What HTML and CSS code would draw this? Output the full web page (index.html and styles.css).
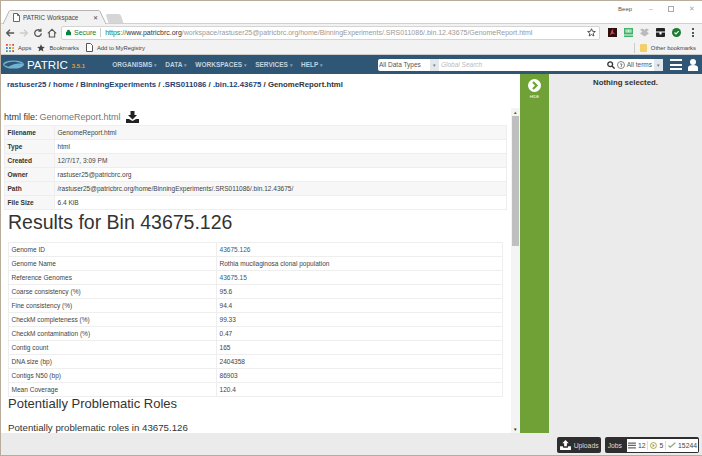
FILE: index.html
```html
<!DOCTYPE html>
<html lang="en">
<head>
  <meta charset="UTF-8">
  <title>PATRIC Workspace</title>
  <link rel="stylesheet" href="styles.css">
</head>
<body>
  <div class="window">
    <div class="tabstrip">
      <div class="tab">
        <svg class="tab-shape" width="103" height="14" viewBox="0 0 103 14"><path d="M0 14 6 1.500Q6.500.5 8 .5h87q1.500 0 2 1L103 14" fill="#f2f2f2" stroke="#b5b5b5"/></svg>
        <svg class="tab-icon" width="7" height="9" viewBox="0 0 7 9"><path d="M.5.500h4l2 2v6h-6zM4.500.5v2h2" fill="#fff" stroke="#666"/></svg>
        <span class="tab-title">PATRIC Workspace</span>
        <span class="tab-close">✕</span>
      </div>
      <div class="new-tab"></div>
      <div class="win-controls">
        <span class="win-user">Beep</span>
        <span class="win-btn">–</span>
        <span class="win-max"></span>
        <span class="win-btn">✕</span>
      </div>
    </div>

    <div class="toolbar">
      <svg class="tool" width="10" height="10" viewBox="0 0 12 12"><path d="M11 6H2M6 2 2 6l4 4" fill="none" stroke="#555" stroke-width="1.6"/></svg>
      <svg class="tool" width="10" height="10" viewBox="0 0 12 12"><path d="M1 6h9M6 2l4 4-4 4" fill="none" stroke="#ccc" stroke-width="1.6"/></svg>
      <svg class="tool" width="10" height="10" viewBox="0 0 12 12"><path d="M10 6.500A4 4 0 1 1 8.800 3.200M9.500 .8v3h-3" fill="none" stroke="#555" stroke-width="1.500"/></svg>
      <svg class="tool" width="10" height="10" viewBox="0 0 12 12"><path d="M1 6.500 6 1.500l5 5M2.800 5.500v5.300h6.400V5.500" fill="none" stroke="#555" stroke-width="1.300"/></svg>
      <div class="omnibox">
        <svg width="5" height="7" viewBox="0 0 7 8"><path d="M0 3h7v5H0zM1.500 3V2a2 2 0 0 1 4 0v1" fill="#0b8043"/></svg>
        <span class="secure">Secure</span>
        <span class="omni-sep"></span>
        <span class="url"><span class="url-https">https://</span><span class="url-host">www.patricbrc.org</span>/workspace/rastuser25@patricbrc.org/home/BinningExperiments/.SRS011086/.bin.12.43675/GenomeReport.html</span>
        <svg class="omni-star" width="9" height="9" viewBox="0 0 10 10"><path d="m5 .8 1.200 2.900 3.100.2-2.400 2 .8 3L5 7.300 2.300 8.900l.8-3-2.400-2 3.100-.2z" fill="none" stroke="#444"/></svg>
      </div>
      <div class="extensions">
        <svg width="9" height="9" viewBox="0 0 9 9"><path d="M0 0h9v9H0z" fill="#2a1010"/><path d="M4 1.500h1.200L5 4l2.500 2.500-2.500-1-3 1.500z" fill="#e0453a"/></svg>
        <svg width="9" height="9" viewBox="0 0 9 9"><path d="M0 0h9v6.500H0z" fill="#3fb56a"/><path d="M1.500 1.500h6v3h-6z" fill="#d9f2e0"/><path d="M0 7.500h9V9H0z" fill="#3fb56a"/><path d="M2.500 2.500h1v1h-1zM5.500 2.500h1v1h-1z" fill="#2b8a4e"/></svg>
        <svg width="9" height="9" viewBox="0 0 10 10"><path d="M0 2 2.500.5 5 2 7.500.5 10 2 7.500 4 10 6 5 9.500 0 6l2.500-2z" fill="#bbb"/></svg>
        <svg width="9" height="9" viewBox="0 0 9 9"><path d="M1 0h7a1 1 0 0 1 1 1v7a1 1 0 0 1-1 1H1a1 1 0 0 1-1-1V1a1 1 0 0 1 1-1z" fill="#222"/><path d="M0 3.500h9v1H5.500v2h-2v-2H0z" fill="#fff"/></svg>
        <svg width="9" height="9" viewBox="0 0 10 10"><circle cx="5" cy="5" r="5" fill="#1d7a30"/><path d="m2.800 5 1.600 1.600 3-3" fill="none" stroke="#fff" stroke-width="1.200"/></svg>
        <span class="kebab"><i></i><i></i><i></i></span>
      </div>
    </div>

    <div class="bookmarks">
      <svg width="8" height="8" viewBox="0 0 9 9">
        <path d="M0 0h2v2H0z" fill="#d9453a"/><path d="M3.500 0h2v2h-2z" fill="#e8a33b"/><path d="M7 0h2v2H7z" fill="#d9453a"/>
        <path d="M0 3.500h2v2H0z" fill="#4a8af0"/><path d="M3.500 3.500h2v2h-2z" fill="#3fa65a"/><path d="M7 3.500h2v2H7z" fill="#e8a33b"/>
        <path d="M0 7h2v2H0z" fill="#3fa65a"/><path d="M3.500 7h2v2h-2z" fill="#4a8af0"/><path d="M7 7h2v2H7z" fill="#d9453a"/>
      </svg>
      <span class="bm-label">Apps</span>
      <svg class="bm-star" width="8" height="8" viewBox="0 0 10 10"><path d="m5 .3 1.400 3.200 3.400.3-2.600 2.200.8 3.400L5 7.600 2 9.400l.8-3.400L.2 3.800l3.400-.3z" fill="#444"/></svg>
      <span class="bm-label">Bookmarks</span>
      <svg class="bm-doc" width="7" height="9" viewBox="0 0 7 9"><path d="M.5.500h4l2 2v6h-6z" fill="#fff" stroke="#555"/></svg>
      <span class="bm-label">Add to MyRegistry</span>
      <span class="bm-sep"></span>
      <span class="folder"></span>
      <span class="bm-label">Other bookmarks</span>
    </div>

    <nav class="site-nav">
      <svg class="logo" width="21" height="9" viewBox="0 0 23 9"><ellipse cx="11.500" cy="4.500" rx="11.500" ry="4.500" fill="#6fb2d2"/><path d="M1 5c5-5 12-4 21-2-7 0-12 1-16 4z" fill="#2f5675"/></svg>
      <span class="brand">PATRIC</span>
      <span class="version">3.5.1</span>
      <div class="menu">
        <span class="menu-item">ORGANISMS<i>▾</i></span>
        <span class="menu-item">DATA<i>▾</i></span>
        <span class="menu-item">WORKSPACES<i>▾</i></span>
        <span class="menu-item">SERVICES<i>▾</i></span>
        <span class="menu-item">HELP<i>▾</i></span>
      </div>
      <div class="search">
        <span class="search-type">All Data Types</span>
        <span class="caret-box">▾</span>
        <span class="search-input">Global Search</span>
        <svg width="8" height="8" viewBox="0 0 8 8"><circle cx="3.200" cy="3.200" r="2.400" fill="none" stroke="#333" stroke-width="1.300"/><path d="m5 5 2.600 2.600" stroke="#333" stroke-width="1.400"/></svg>
        <svg width="8" height="8" viewBox="0 0 8 8"><circle cx="4" cy="4" r="3.500" fill="none" stroke="#666" stroke-width=".8"/><path d="M3 3h2L4 6" fill="none" stroke="#666" stroke-width=".8"/></svg>
        <span class="search-terms">All terms</span>
        <span class="caret-box">▾</span>
      </div>
      <span class="burger"><i></i><i></i><i></i></span>
      <svg width="10" height="12" viewBox="0 0 10 12"><circle cx="5" cy="3" r="3" fill="#fff"/><path d="M0 12V8.500C0 7 2 6 5 6s5 1 5 2.500V12z" fill="#fff"/></svg>
    </nav>

    <div class="workspace">
      <main class="content">
        <div class="breadcrumb">
          <span class="crumb">rastuser25</span> / <span class="crumb">home</span> / <span class="crumb">BinningExperiments</span> / <span class="crumb">.SRS011086</span> / <span class="crumb">.bin.12.43675</span> / GenomeReport.html
        </div>
        <div class="viewer">
          <div class="report">
            <div class="file-head">
              <span class="file-kind">html file:</span>
              <span class="file-name">GenomeReport.html</span>
              <svg class="download" width="13" height="12" viewBox="0 0 13 12"><path d="M4.500 0h4v4h2.500L6.500 8.500 2 4h2.500zM0 8h3l3.500 2L10 8h3v4H0z" fill="#222"/></svg>
            </div>
            <table class="meta">
              <tr><th>Filename</th><td>GenomeReport.html</td></tr>
              <tr><th>Type</th><td>html</td></tr>
              <tr><th>Created</th><td>12/7/17, 3:09 PM</td></tr>
              <tr><th>Owner</th><td>rastuser25@patricbrc.org</td></tr>
              <tr><th>Path</th><td>/rastuser25@patricbrc.org/home/BinningExperiments/.SRS011086/.bin.12.43675/</td></tr>
              <tr><th>File Size</th><td>6.4 KiB</td></tr>
            </table>
            <h1>Results for Bin 43675.126</h1>
            <table class="results">
              <tr><td>Genome ID</td><td><span class="link">43675.126</span></td></tr>
              <tr><td>Genome Name</td><td>Rothia mucilaginosa clonal population</td></tr>
              <tr><td>Reference Genomes</td><td><span class="link">43675.15</span></td></tr>
              <tr><td>Coarse consistency (%)</td><td>95.6</td></tr>
              <tr><td>Fine consistency (%)</td><td>94.4</td></tr>
              <tr><td>CheckM completeness (%)</td><td>99.33</td></tr>
              <tr><td>CheckM contamination (%)</td><td>0.47</td></tr>
              <tr><td>Contig count</td><td>165</td></tr>
              <tr><td>DNA size (bp)</td><td>2404358</td></tr>
              <tr><td>Contigs N50 (bp)</td><td>86903</td></tr>
              <tr><td>Mean Coverage</td><td>120.4</td></tr>
            </table>
            <h2>Potentially Problematic Roles</h2>
            <p class="roles">Potentially problematic roles in 43675.126</p>
          </div>
          <div class="scrollbar">
            <span class="arrow">▴</span>
            <span class="thumb"></span>
            <span class="arrow arrow-end">▾</span>
          </div>
        </div>
      </main>

      <div class="hide-panel">
        <span class="hide-btn">
          <svg width="13" height="13" viewBox="0 0 13 13"><circle cx="6.500" cy="6.500" r="6.500" fill="#fff"/><path d="m5 3 3.500 3.500L5 10" fill="none" stroke="#6fa136" stroke-width="2.200"/></svg>
        </span>
        <span class="hide-label">HIDE</span>
      </div>

      <aside class="details">Nothing selected.</aside>
    </div>

    <footer class="statusbar">
      <div class="status-box uploads">
        <svg width="11" height="10" viewBox="0 0 12 11"><path d="M4.500 7V3.500H2.500L6 0l3.500 3.500h-2V7zM0 7h3l.5 1.500h5L9 7h3v4H0z" fill="#fff"/></svg>
        <span>Uploads</span>
      </div>
      <div class="status-box jobs">
        <span>Jobs</span>
        <div class="job-counts">
          <svg width="8" height="7" viewBox="0 0 9 7"><path d="M0 0h9v1.500H0zM0 2.700h9v1.500H0zM0 5.400h9V7H0z" fill="#666"/></svg>
          <span>12</span>
          <span class="job-sep"></span>
          <svg width="7" height="7" viewBox="0 0 8 8"><circle cx="4" cy="4" r="3.400" fill="none" stroke="#a09a2c"/><path d="M3 2.300 5.600 4 3 5.700z" fill="#a09a2c"/></svg>
          <span>5</span>
          <span class="job-sep"></span>
          <svg width="8" height="6" viewBox="0 0 9 7"><path d="m.5 4 2 2L8.500.8" fill="none" stroke="#8aa880" stroke-width="1.500"/></svg>
          <span>15244</span>
        </div>
      </div>
    </footer>
  </div>
</body>
</html>
```

FILE: styles.css
```css
* {
  box-sizing: border-box;
}

html, body {
  margin: 0;
  padding: 0;
  height: 100%;
  overflow: hidden;
}

body {
  font-family: "Liberation Sans", Arial, sans-serif;
  background-color: #fff;
  color: #333;
}

.window {
  display: flex;
  flex-direction: column;
  height: 456px;
  border-top: 1px solid #b8ad9c;
  border-left: 1px solid #b8ad9c;
}

/* browser chrome */
.tabstrip {
  display: flex;
  align-items: flex-end;
  flex: none;
  height: 23px;
  padding-left: 2px;
  background-color: #fff;
  border-bottom: 1px solid #d0d0d0;
}

.tab {
  position: relative;
  display: flex;
  align-items: center;
  width: 103px;
  height: 14px;
  margin-bottom: -1px;
  padding: 0 8px 0 10px;
  font-size: 6.300px;
  color: #444;
}

.tab-shape {
  position: absolute;
  left: 0;
  top: 0;
}

.tab-icon, .tab-title, .tab-close {
  position: relative;
}

.tab-title {
  margin-left: 3px;
  white-space: nowrap;
}

.tab-close {
  margin-left: auto;
  font-size: 6px;
}

.new-tab {
  width: 15px;
  height: 9px;
  margin-left: 1px;
  background-color: #d6d6d6;
  border-radius: 2px 2px 0 0;
  transform: skewX(18deg);
}

.win-controls {
  display: flex;
  align-items: center;
  gap: 15px;
  margin-left: auto;
  margin-right: 7px;
  height: 15px;
  align-self: flex-start;
  font-size: 6px;
  color: #888;
}

.win-user {
  color: #555;
  margin-right: 2px;
}

.win-btn {
  font-size: 7px;
  color: #aaa;
}

.win-max {
  width: 6px;
  height: 6px;
  border: 1px solid #aaa;
}

.toolbar {
  display: flex;
  align-items: center;
  flex: none;
  gap: 4px;
  height: 17px;
  padding: 0 5px 0 4px;
  background-color: #f2f2f2;
}

.tool {
  flex: none;
}

.omnibox {
  display: flex;
  align-items: center;
  flex: 1;
  height: 14px;
  padding: 0 3px 0 4px;
  background-color: #fff;
  border: 1px solid #d4d4d4;
  border-radius: 2px;
  font-size: 7px;
  color: #999;
  white-space: nowrap;
}

.secure {
  margin-left: 3px;
  color: #0b8043;
}

.omni-sep {
  width: 1px;
  height: 9px;
  margin: 0 4px;
  background-color: #ccc;
}

.url-https {
  color: #0b8043;
}

.url-host {
  color: #333;
}

.omni-star {
  margin-left: auto;
}

.extensions {
  display: flex;
  align-items: center;
  gap: 7px;
  margin-left: 4px;
}

.kebab {
  display: flex;
  flex-direction: column;
  gap: 1.500px;
  margin: 0 3px 0 4px;
}

.kebab i {
  width: 2px;
  height: 2px;
  background-color: #555;
}

.bookmarks {
  display: flex;
  align-items: center;
  flex: none;
  gap: 4px;
  height: 14px;
  padding: 0 6px 0 5px;
  background-color: #f2f2f2;
  border-bottom: 1px solid #ccc;
}

.bm-label {
  font-size: 5.900px;
  color: #444;
  white-space: nowrap;
}

.bm-star {
  margin-left: 2px;
}

.bm-doc {
  margin-left: 3px;
}

.bm-sep {
  width: 1px;
  height: 10px;
  margin-left: auto;
  background-color: #ccc;
}

.folder {
  width: 7px;
  height: 8px;
  margin-left: 1px;
  background-color: #f3cf6b;
  border-radius: 1px;
}

/* site header */
.site-nav {
  display: flex;
  align-items: center;
  flex: none;
  height: 19px;
  padding-left: 2px;
  padding-right: 4px;
  background-color: #2f5675;
  color: #fff;
}

.brand {
  margin-left: 3px;
  font-size: 11.600px;
}

.version {
  margin-left: 4px;
  margin-top: 2px;
  font-size: 6px;
  font-weight: bold;
  color: #e0a030;
}

.menu {
  display: flex;
  gap: 8px;
  margin-left: 27px;
}

.menu-item {
  font-size: 6.500px;
  font-weight: bold;
  color: #c3d2de;
  white-space: nowrap;
}

.menu-item i {
  margin-left: 2px;
  font-style: normal;
  font-size: 5px;
  color: #7e9bb1;
}

.search {
  display: flex;
  align-items: center;
  gap: 2px;
  width: 285px;
  height: 12px;
  margin-left: auto;
  padding: 0 0 0 1px;
  background-color: #fff;
  border-radius: 2px;
  font-size: 6.500px;
  color: #555;
}

.search-type {
  width: 49px;
  white-space: nowrap;
}

.caret-box {
  display: flex;
  align-items: center;
  justify-content: center;
  width: 9px;
  height: 12px;
  background-color: #e3e8ec;
  font-size: 5px;
  color: #778;
}

.search-input {
  flex: 1;
  font-style: italic;
  color: #bbb;
}

.search-terms {
  white-space: nowrap;
}

.burger {
  display: flex;
  flex-direction: column;
  gap: 2.500px;
  margin: 0 6px 0 7px;
}

.burger i {
  width: 12px;
  height: 2px;
  background-color: #fff;
}

/* main area */
.workspace {
  display: flex;
  flex: 1;
  min-height: 0;
}

.content {
  display: flex;
  flex-direction: column;
  width: 519px;
  background-color: #fff;
}

.breadcrumb {
  flex: none;
  height: 34px;
  padding: 6px 0 0 6px;
  font-size: 7.800px;
  font-weight: bold;
  color: #333;
  white-space: nowrap;
}

.crumb {
  color: #1d3f72;
}

.viewer {
  display: flex;
  flex: 1;
  min-height: 0;
}

.report {
  width: 510px;
  padding-left: 3px;
  overflow: hidden;
}

.file-head {
  display: flex;
  align-items: center;
  gap: 2px;
  height: 17px;
  font-size: 9px;
  color: #333;
  white-space: nowrap;
}

.file-name {
  color: #777;
}

.download {
  margin-left: 3px;
}

table {
  border-collapse: collapse;
  font-size: 6.550px;
  color: #444;
}

td, th {
  height: 14px;
  padding: 0 2.500px;
  border: 1px solid #eee;
  text-align: left;
}

.meta {
  width: 503px;
}

.meta th {
  width: 50px;
  background-color: #f7f7f7;
  font-weight: bold;
  color: #333;
}

.meta tr:nth-child(odd) td {
  background-color: #f7f7f7;
}

h1 {
  margin: 0 0 0 4px;
  height: 32px;
  font-size: 19.500px;
  line-height: 25px;
  font-weight: normal;
  color: #333;
}

.results {
  width: 495px;
  margin-left: 4px;
}

.results td:first-child {
  width: 208px;
}

.link {
  color: #2b5f8f;
}

h2 {
  margin: 0 0 0 4px;
  height: 22px;
  font-size: 13px;
  line-height: 14px;
  font-weight: normal;
  color: #333;
}

.roles {
  margin: 0 0 0 4px;
  padding-top: 3px;
  font-size: 9.700px;
  color: #333;
  white-space: nowrap;
}

.scrollbar {
  display: flex;
  flex-direction: column;
  align-items: center;
  width: 9px;
  padding-right: 1px;
  background-color: #f4f4f4;
}

.arrow {
  height: 8px;
  font-size: 5px;
  line-height: 8px;
  color: #555;
}

.thumb {
  width: 7px;
  height: 130px;
  background-color: #bfbfbf;
}

.arrow-end {
  margin-top: auto;
  color: #222;
}

.hide-panel {
  display: flex;
  flex-direction: column;
  align-items: center;
  width: 29px;
  padding-top: 5px;
  background-color: #6fa136;
}

.hide-btn {
  display: flex;
  height: 13px;
}

.hide-label {
  margin-top: 2px;
  font-size: 4px;
  color: #fff;
}

.details {
  flex: 1;
  padding-top: 4px;
  background-color: #ebebeb;
  text-align: center;
  font-size: 7.800px;
  font-weight: bold;
  color: #333;
}

/* bottom bar */
.statusbar {
  display: flex;
  align-items: flex-start;
  justify-content: flex-end;
  flex: none;
  gap: 4px;
  height: 23px;
  padding: 4px 3px 0 0;
  background-color: #ebebeb;
  border-bottom: 1px solid #b8ad9c;
}

.status-box {
  display: flex;
  align-items: center;
  gap: 3px;
  height: 16px;
  padding: 0 1px 0 3px;
  background-color: #2e2e2e;
  border-radius: 2px;
  font-size: 6.800px;
  color: #d5dbe3;
}

.uploads {
  width: 44px;
}

.jobs {
  gap: 5px;
}

.job-counts {
  display: flex;
  align-items: center;
  gap: 2px;
  width: 71px;
  height: 13px;
  padding: 0 1px;
  background-color: #fff;
  color: #444;
}

.job-sep {
  width: 1px;
  height: 9px;
  background-color: #ddd;
}
```
